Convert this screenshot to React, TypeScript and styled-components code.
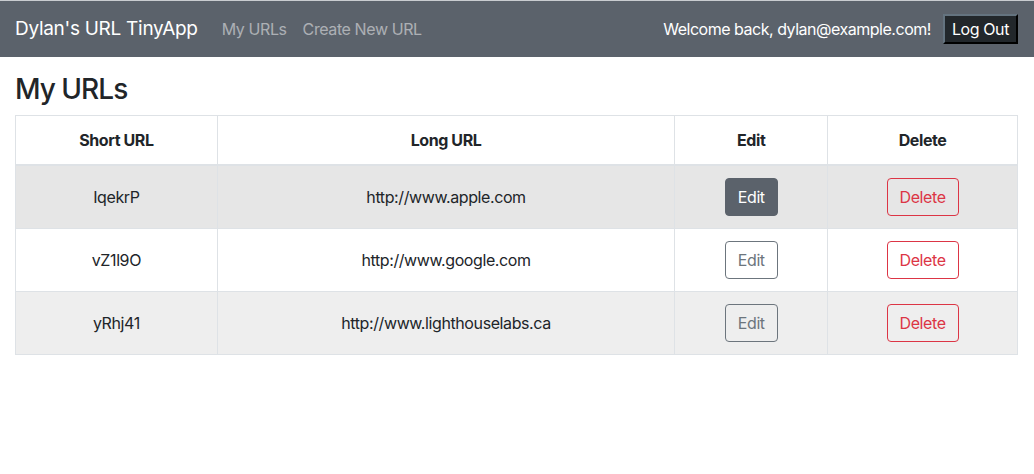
import React from 'react'
import styled, { createGlobalStyle } from 'styled-components'

const Global = createGlobalStyle`
  * { box-sizing: border-box; }
  body {
    margin: 0;
    background: #fff;
    color: #212529;
    font-family: Inter, 'Noto Sans', sans-serif;
    font-size: 16px;
    line-height: 1.5;
    letter-spacing: -0.025em;
  }
`

const Navbar = styled.nav`
  display: flex;
  align-items: center;
  height: 57px;
  padding: 0 16px 0 15px;
  border-top: 1px solid #c9ccd0;
  background: #5b626b;
`

const Brand = styled.a`
  color: #fff;
  font-size: 19px;
  letter-spacing: -0.015em;
  margin-right: 24px;
  text-decoration: none;
`

const NavLinks = styled.div`
  display: flex;
  gap: 16px;
  flex: 1;
`

const NavLink = styled.a`
  color: rgba(255, 255, 255, 0.5);
  text-decoration: none;
`

const Welcome = styled.span`
  color: #fff;
  margin-right: 12px;
  letter-spacing: -0.03em;
`

const LogOut = styled.button`
  font: inherit;
  letter-spacing: inherit;
  color: #fff;
  background: #22272b;
  border: 2px outset #22272b;
  border-right-color: #000;
  border-bottom-color: #000;
  padding: 0 7px;
  height: 30px;
  line-height: 26px;
`

const Main = styled.main`
  padding: 16px 16px 0 15px;
`

const Title = styled.h3`
  margin: 0 0 8px;
  font-size: 28px;
  font-weight: 500;
  line-height: 1.2;
  letter-spacing: -0.035em;
`

const Table = styled.table`
  width: 100%;
  border-collapse: collapse;
  border: 1px solid #dee2e6;
`

const Th = styled.th`
  padding: 12px;
  border: 1px solid #dee2e6;
  border-bottom-width: 2px;
  text-align: center;
  font-weight: 700;
`

const Row = styled.tr<{ $bg: string }>`
  background: ${p => p.$bg};
`

const Td = styled.td`
  padding: 12px;
  border: 1px solid #dee2e6;
  text-align: center;
  vertical-align: middle;
`

const Btn = styled.button<{ $tone: 'secondary' | 'danger'; $filled?: boolean }>`
  font: inherit;
  letter-spacing: inherit;
  line-height: 24px;
  padding: 6px 12px;
  border-radius: 4px;
  background: ${p => (p.$filled ? '#5b626b' : 'transparent')};
  color: ${p => (p.$filled ? '#fff' : p.$tone === 'danger' ? '#dc3545' : '#6c757d')};
  border: 1px solid ${p => (p.$filled ? '#5b626b' : p.$tone === 'danger' ? '#dc3545' : '#6c757d')};
`

const urls = [
  { short: 'IqekrP', long: 'http://www.apple.com', bg: '#e6e6e6', hover: true },
  { short: 'vZ1l9O', long: 'http://www.google.com', bg: '#ffffff', hover: false },
  { short: 'yRhj41', long: 'http://www.lighthouselabs.ca', bg: '#eeeeee', hover: false },
]

export default function App() {
  return (
    <>
      <Global />
      <Navbar>
        <Brand href="#">Dylan's URL TinyApp</Brand>
        <NavLinks>
          <NavLink href="#">My URLs</NavLink>
          <NavLink href="#">Create New URL</NavLink>
        </NavLinks>
        <Welcome>Welcome back, dylan@example.com!</Welcome>
        <LogOut>Log Out</LogOut>
      </Navbar>
      <Main>
        <Title>My URLs</Title>
        <Table>
          <colgroup>
            <col style={{ width: 202 }} />
            <col style={{ width: 458 }} />
            <col style={{ width: 153 }} />
            <col style={{ width: 190 }} />
          </colgroup>
          <thead>
            <tr>
              <Th>Short URL</Th>
              <Th>Long URL</Th>
              <Th>Edit</Th>
              <Th>Delete</Th>
            </tr>
          </thead>
          <tbody>
            {urls.map(u => (
              <Row key={u.short} $bg={u.bg}>
                <Td>{u.short}</Td>
                <Td>{u.long}</Td>
                <Td>
                  <Btn $tone="secondary" $filled={u.hover}>Edit</Btn>
                </Td>
                <Td>
                  <Btn $tone="danger">Delete</Btn>
                </Td>
              </Row>
            ))}
          </tbody>
        </Table>
      </Main>
    </>
  )
}
